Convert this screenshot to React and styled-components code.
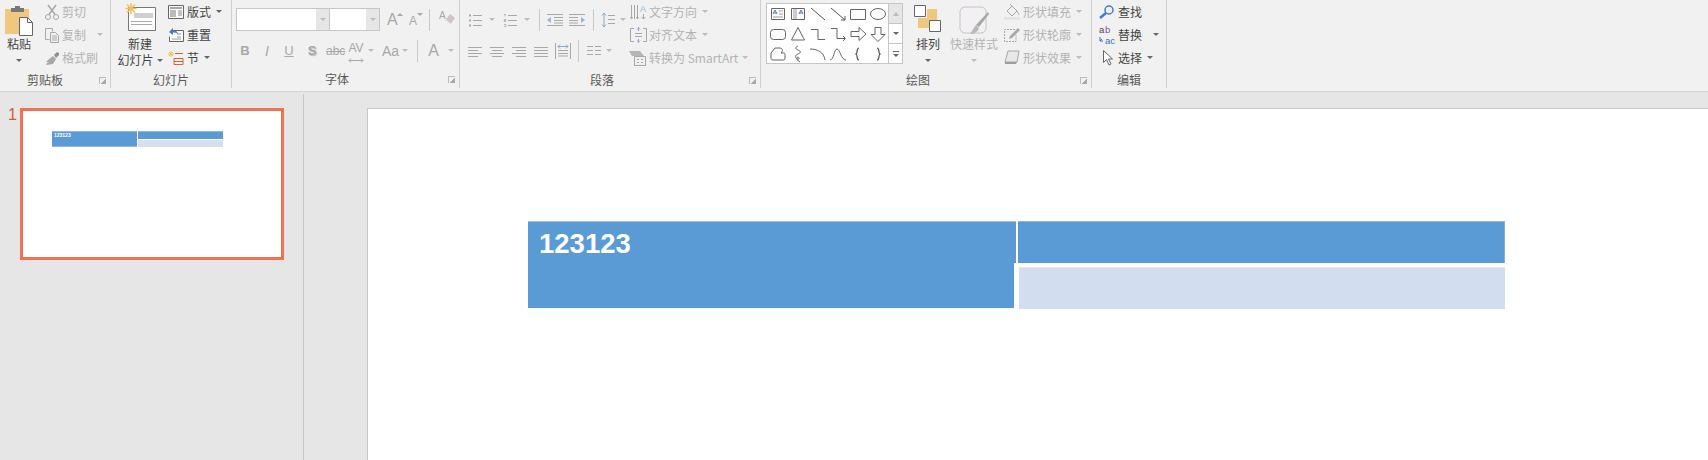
import React from 'react';
import styled, {createGlobalStyle} from 'styled-components';

const active = '#444';
const muted = '#b3b3b3';
const iconGray = '#a8a8a8';
const lineGray = '#c6c6c6';

const GlobalStyle = createGlobalStyle`
  html, body {
    margin: 0;
    height: 460px;
    overflow: hidden;
    background: #e6e6e6;
  }
  body {
    font-family: "Noto Sans CJK SC", "Liberation Sans", sans-serif;
    font-size: 12px;
  }
  svg {
    display: block;
    flex: none;
  }
`

const Page = styled.div`
  display: flex;
  flex-direction: column;
  width: 1708px;
  height: 460px;
  overflow: hidden;
`

const Ribbon = styled.div`
  display: flex;
  flex: none;
  height: 91px;
  background: #f1f1f1;
  border-bottom: 1px solid #d4d4d4;
`

const Group = styled.div`
  display: flex;
  flex-direction: column;
  flex: none;
  box-sizing: border-box;
  width: ${({$w}) => $w}px;
  height: 88px;
  border-right: 1px solid #d0d0d0;
`

const GroupBody = styled.div`
  display: flex;
  height: 71px;
  padding-left: ${({$pad}) => $pad || 0}px;
`

const GroupFooter = styled.div`
  display: flex;
  align-items: center;
  height: 17px;
  padding: 0 4px 0 ${({$labelX}) => $labelX}px;
  color: #5a5a5a;
  line-height: 17px;
`

const Launcher = styled.span`
  width: 6px;
  height: 6px;
  margin-left: auto;
  margin-top: 2px;
  border-left: 1px solid #bbb;
  border-top: 1px solid #bbb;
  background: linear-gradient(135deg, transparent 55%, #aaa 55%);
`

const LargeButton = styled.div`
  display: flex;
  flex-direction: column;
  align-items: center;
  flex: none;
  width: ${({$w}) => $w}px;
  margin-left: ${({$ml}) => $ml || 0}px;
  color: ${({$off}) => ($off ? muted : active)};
  line-height: 16px;
`

const LargeIcon = styled.div`
  display: flex;
  justify-content: center;
  height: ${({$top}) => 36 - $top}px;
  padding-top: ${({$top}) => $top}px;
`

const LargeText = styled.div`
  display: flex;
  align-items: center;
  justify-content: center;
  gap: 3px;
  height: 16px;
  white-space: nowrap;
`

const SmallStack = styled.div`
  display: flex;
  flex-direction: column;
  flex: none;
  margin-left: ${({$ml}) => $ml || 0}px;
`

const SmallRow = styled.div`
  display: flex;
  align-items: center;
  gap: ${({$gap}) => $gap || 2}px;
  height: 23px;
  color: ${({$off}) => ($off ? muted : active)};
  white-space: nowrap;
`

const IconSlot = styled.span`
  display: flex;
  justify-content: center;
  width: 16px;
`

const Caret = styled.span`
  flex: none;
  width: 0;
  height: 0;
  margin-left: ${({$ml}) => $ml || 0}px;
  border-left: 3px solid transparent;
  border-right: 3px solid transparent;
  border-top: 3px solid ${({$off}) => ($off ? '#bcbcbc' : '#666')};
`

const ToolColumn = styled.div`
  display: flex;
  flex-direction: column;
  flex: none;
  width: ${({$w}) => $w}px;
  padding-top: 8px;
`

const ToolRow = styled.div`
  display: flex;
  align-items: center;
  height: 23px;
  margin-bottom: 8px;
`

const Gap = styled.span`
  flex: none;
  width: ${({$w}) => $w}px;
`

const ToolSep = styled.span`
  flex: none;
  width: 1px;
  height: 22px;
  background: #c9c9c9;
`

const Glyph = styled.span`
  display: block;
  flex: none;
  width: ${({$w}) => $w}px;
  margin-top: ${({$mt}) => $mt || 0}px;
  color: ${iconGray};
  font-family: "Liberation Sans", sans-serif;
  font-size: ${({$size}) => $size || 13}px;
  font-weight: ${({$bold}) => ($bold ? 700 : 400)};
  font-style: ${({$italic}) => ($italic ? 'italic' : 'normal')};
  text-align: center;
  text-decoration: ${({$deco}) => $deco || 'none'};
  text-shadow: ${({$shadow}) => ($shadow ? '1px 1px 1px #bbb' : 'none')};
  line-height: 20px;
`

const GrowTool = styled.span`
  display: flex;
  flex: none;
  align-items: flex-start;
  width: 14px;
  height: 20px;
`

const GrowMark = styled.span`
  flex: none;
  width: 0;
  height: 0;
  margin-top: 3px;
  border-left: 3px solid transparent;
  border-right: 3px solid transparent;
  border-bottom: ${({$down}) => ($down ? 'none' : `3px solid ${iconGray}`)};
  border-top: ${({$down}) => ($down ? `3px solid ${iconGray}` : 'none')};
`

const EraserTool = styled.span`
  display: flex;
  flex: none;
  align-items: flex-end;
  width: 15px;
`

const FontBox = styled.div`
  display: flex;
  flex: none;
  box-sizing: border-box;
  width: 144px;
  height: 23px;
  border: 1px solid ${lineGray};
  background: #e6e6e6;
`

const FontField = styled.span`
  display: block;
  width: ${({$w}) => $w}px;
  background: #fff;
`

const FontDrop = styled.span`
  display: flex;
  align-items: center;
  justify-content: center;
  width: 13px;
  border-right: ${({$sep}) => ($sep ? '1px solid #c6c6c6' : 'none')};
`

const Gallery = styled.div`
  display: flex;
  flex: none;
  box-sizing: border-box;
  width: 137px;
  height: 61px;
  margin: 3px 0 0 5px;
  border: 1px solid ${lineGray};
  background: #fff;
`

const ShapeGrid = styled.div`
  display: grid;
  grid-template-columns: repeat(6, 20px);
  grid-auto-rows: 20px;
  box-sizing: border-box;
  width: 121px;
  padding-left: 1px;
  align-items: center;
  justify-items: center;
`

const ScrollColumn = styled.div`
  display: flex;
  flex-direction: column;
  flex: 1;
  border-left: 1px solid ${lineGray};
`

const ScrollButton = styled.div`
  display: flex;
  flex-direction: column;
  align-items: center;
  justify-content: center;
  gap: 2px;
  flex: 1;
  background: ${({$dim}) => ($dim ? '#e6e6e6' : '#fff')};
  border-top: ${({$first}) => ($first ? 'none' : '1px solid #c6c6c6')};
`

const ScrollBar = styled.span`
  width: 6px;
  height: 1px;
  background: #666;
`

const UpCaret = styled.span`
  width: 0;
  height: 0;
  border-left: 3px solid transparent;
  border-right: 3px solid transparent;
  border-bottom: 4px solid #bdbdbd;
`

const Workspace = styled.div`
  display: flex;
  flex: 1;
  min-height: 0;
`

const SlidePanel = styled.div`
  flex: none;
  display: flex;
  align-items: flex-start;
  box-sizing: border-box;
  width: 304px;
  margin-top: 2px;
  padding: 14px 0 0 8px;
  border-right: 1px solid ${lineGray};
`

const SlideNumber = styled.span`
  width: 12px;
  margin-top: -1px;
  color: #d9573a;
  font-family: "Liberation Sans", sans-serif;
  font-size: 16px;
  line-height: 16px;
`

const Thumbnail = styled.div`
  box-sizing: border-box;
  width: 264px;
  height: 152px;
  padding: 20px 0 0 29px;
  border: 3px solid #f27352;
  background: #fff;
`

const Editor = styled.div`
  flex: 1;
  padding: 16px 0 0 63px;
`

const Slide = styled.div`
  box-sizing: border-box;
  height: 400px;
  padding: 112px 0 0 160px;
  border-left: 1px solid ${lineGray};
  border-top: 1px solid ${lineGray};
  background: #fff;
`

const TableRoot = styled.div`
  display: flex;
  width: ${({$w}) => $w}px;
`

const SpanCell = styled.div`
  flex: none;
  box-sizing: border-box;
  width: 488px;
  height: 87px;
  padding-left: 11px;
  border-top: 1px solid #9dc3e8;
  background:
    linear-gradient(#5b9bd5 41px, transparent 41px),
    linear-gradient(to right, #5b9bd5 486px, transparent 486px);
  color: #fff;
  font-family: "Liberation Sans", sans-serif;
  font-size: 27.500px;
  font-weight: 700;
  line-height: 44px;
`

const RightColumn = styled.div`
  display: flex;
  flex-direction: column;
  flex: 1;
  margin-left: 2px;
`

const HeadCell = styled.div`
  box-sizing: border-box;
  height: 42px;
  border-top: 1px solid #8db8e2;
  border-right: 1px solid #7fb0df;
  background: #5b9bd5;
`

const BodyCell = styled.div`
  box-sizing: border-box;
  height: 42px;
  margin: 4px 0 0 1px;
  border-top: 1px solid #e4ebf6;
  background: #d2deef;
`

const MiniTable = styled.div`
  display: flex;
  width: 171px;
  height: 16px;
`

const MiniSpan = styled.div`
  flex: none;
  box-sizing: border-box;
  width: 85px;
  height: 16px;
  padding-left: 2px;
  border-top: 1px solid #8db8e2;
  border-bottom: 1px solid #8db8e2;
  background: #5b9bd5;
  color: #fff;
  font-family: "Liberation Sans", sans-serif;
  font-size: 5px;
  font-weight: 700;
  line-height: 7px;
`

const MiniRight = styled.div`
  display: flex;
  flex-direction: column;
  flex: 1;
  margin-left: 1px;
`

const MiniHead = styled.div`
  height: 8px;
  background: #5b9bd5;
  border-top: 1px solid #8db8e2;
  box-sizing: border-box;
`

const MiniBody = styled.div`
  height: 7px;
  margin-top: 1px;
  background: #d5dff0;
`

const Ico = ({w = 16, h = 16, stroke = iconGray, fill = 'none', sw = 1, children}) => (
  <svg width={w} height={h} viewBox={`0 0 ${w} ${h}`} fill={fill} stroke={stroke} strokeWidth={sw}>
    {children}
  </svg>
)

const PasteIcon = () => (
  <Ico w={30} h={31} stroke="none">
    <path d="M1 4h24v25H1z" fill="#f0c77f"/>
    <path d="M7 3h4V1h5v2h4v4H7z" fill="#777"/>
    <path d="M15.500 12.500h8l5 5v13h-13z" fill="#fff" stroke="#666"/>
    <path d="M23.500 12.500v5h5" fill="none" stroke="#666"/>
  </Ico>
)

const CutIcon = () => (
  <Ico>
    <circle cx="4" cy="13" r="2.500"/>
    <circle cx="12" cy="13" r="2.500"/>
    <path d="M5 10.500L12 1M11 10.500L4 1" strokeWidth="1.500"/>
  </Ico>
)

const CopyIcon = () => (
  <Ico>
    <path d="M1.500 1.500h7v3M1.500 1.500v11h4"/>
    <path d="M6.500 5.500h5l3 3v7h-8zM8 9h5M8 11h5M8 13h5" fill="#f1f1f1"/>
  </Ico>
)

const BrushIcon = () => (
  <Ico stroke="none" fill={iconGray}>
    <path d="M9 6l3 3-3 5-7 1 1-2 2-1-3 0 2-2z"/>
    <path d="M10 5l3-3 2 1 0 2-3 3z" fill="#8f8f8f"/>
  </Ico>
)

const NewSlideIcon = () => (
  <Ico w={31} h={28} stroke="none">
    <path d="M3.500 4.500h27v23h-27z" fill="#fff" stroke="#777"/>
    <path d="M9 10h19v5H9z" fill="#cfcfcf"/>
    <path d="M6 18.500h21M6 21.500h21" stroke="#a8a8a8"/>
    <path d="M6 0v11M0.500 5.500h11M2 1.500l8 8M10 1.500l-8 8" stroke="#f0c060" strokeWidth="1.500"/>
  </Ico>
)

const LayoutIcon = () => (
  <Ico stroke="#666">
    <path d="M.500 1.500h15v13H.500z" fill="#fff"/>
    <path d="M2 4h12" stroke="#888" strokeWidth="1.500"/>
    <path d="M2 6h6v7H2z" fill="#bbb" stroke="none"/>
    <path d="M10 7h4M10 9h4M10 11h4" stroke="#888"/>
  </Ico>
)

const ResetIcon = () => (
  <Ico stroke="#666">
    <path d="M3.500 3.500h12v11h-14v-5" fill="#fff"/>
    <path d="M9 7h4M9 10h4M4 12h9" stroke="#999"/>
    <path d="M1 5l4-4v2.500c3 0 5 1.500 5 4-1-1.500-2.500-2-5-2V8z" fill="#3f7fc4" stroke="none"/>
  </Ico>
)

const SectionIcon = () => (
  <Ico>
    <path d="M0 4h6M3 1v6M1 2l4 4M5 2L1 6" stroke="#f0c060"/>
    <path d="M7 3.500h8M6 8.500h9M6 8.500v6h9v-6M6 11.500h9" stroke="#d2633c"/>
  </Ico>
)

const EraserIcon = () => (
  <Ico w={10} h={13} stroke="none">
    <path d="M5 1l5 4-5 7-5-4z" fill="#cdc3c8"/>
    <path d="M1 7l5 4-1 1-5-4z" fill="#f6f6f6"/>
  </Ico>
)

const SpacingIcon = () => (
  <Ico w={16} h={5}>
    <path d="M1 2.500h14M1 2.500l2-2M1 2.500l2 2M15 2.500l-2-2M15 2.500l-2 2"/>
  </Ico>
)

const ListIcon = ({numbered}) => (
  <Ico w={14} h={14}>
    <path d="M5 2.500h9M5 7.500h9M5 12.500h9"/>
    {numbered
      ? <path d="M1 1.500h2M2 1.500v2M1 6.500h2v1H1v1h2M1 11.500h2v2H1" strokeWidth=".700"/>
      : <path d="M1 1.500h2v2H1zM1 6.500h2v2H1zM1 11.500h2v2H1z" fill={iconGray} stroke="none"/>}
  </Ico>
)

const IndentIcon = ({flip}) => (
  <Ico w={16} h={12}>
    <g transform={flip ? 'translate(16 0) scale(-1 1)' : undefined}>
      <path d="M0 .500h16M7 3.500h9M7 6.500h9M0 11.500h16M7 9h9"/>
      <path d="M0 6l4-3v6z" fill="#9ab6d4" stroke="none"/>
    </g>
  </Ico>
)

const LineSpacingIcon = () => (
  <Ico w={14} h={16}>
    <path d="M3 1v14M1 3.500L3 1l2 2.500M1 12.500L3 15l2-2.500" stroke="#8da9c6"/>
    <path d="M7 3.500h7M7 7.500h7M7 11.500h7"/>
  </Ico>
)

const AlignIcon = ({mode}) => {
  const short = {left: 'M0 5.500h10M0 11.500h10', center: 'M2 5.500h10M2 11.500h10', right: 'M4 5.500h10M4 11.500h10', full: 'M0 5.500h14M0 11.500h14'}[mode];
  return (
    <Ico w={14} h={12}>
      <path d="M0 2.500h14M0 8.500h14"/>
      <path d={short}/>
    </Ico>
  );
}

const DistributeIcon = () => (
  <Ico w={16} h={16}>
    <path d="M.500 0v16M15.500 0v16M3 7.500h10M3 10.500h10M3 13h10"/>
    <path d="M3 3.500h10M3 3.500l2-2M3 3.500l2 2M13 3.500l-2-2M13 3.500l-2 2" stroke="#8da9c6"/>
  </Ico>
)

const ColumnsIcon = () => (
  <Ico w={14} h={10}>
    <path d="M0 .500h6M8 .500h6M0 4.500h6M8 4.500h6M0 8.500h6M8 8.500h6"/>
  </Ico>
)

const TextDirIcon = () => (
  <Ico w={17} h={16}>
    <path d="M1.500 1v14M4.500 1v14M7.500 1v14M1.500 15l-1-2M1.500 15l1-2M7.500 15l-1-2M7.500 15l1-2"/>
    <text x="10" y="8" fill="#9ab6d4" stroke="none" fontFamily="Liberation Sans" fontSize="9">A</text>
    <path d="M13.500 10v5M11.500 13l2 2 2-2"/>
  </Ico>
)

const AlignTextIcon = () => (
  <Ico w={17} h={16}>
    <path d="M4 1.500H.500v13H4M13 1.500h3.500v13H13"/>
    <path d="M5 6.500h7M5 9.500h7" />
    <path d="M8.500 0v4M7 2.500L8.500 1 10 2.500M8.500 16v-4M7 13.500L8.500 15l1.500-1.500" stroke="#8da9c6"/>
  </Ico>
)

const SmartArtIcon = () => (
  <Ico w={18} h={16} stroke="none">
    <path d="M0 1h11l4 5H3z" fill="#b5b5b5"/>
    <path d="M5.500 6.500h11v9h-11z" fill="#f1f1f1" stroke={iconGray}/>
    <path d="M8 9.500h2M12 9.500h2M8 12.500h2M12 12.500h2" stroke={iconGray}/>
  </Ico>
)

const shapes = [
  <><path d="M2.500 3.500h13v11h-13z" stroke="#666"/><path d="M4 9l2-4 2 4M4.500 8h3" stroke="#3f7fc4"/><path d="M10 6h4M10 9h4M4 12h10" stroke="#999"/></>,
  <><path d="M2.500 3.500h13v11h-13z" stroke="#666"/><path d="M5 4v10M7 4v10" stroke="#999"/><path d="M10 9l2-4 2 4M10.500 8h3" stroke="#3f7fc4"/></>,
  <path d="M2 3l14 12" stroke="#555"/>,
  <path d="M2 3l14 12M16 11v4h-4" stroke="#555"/>,
  <path d="M1.500 4.500h15v10h-15z" stroke="#666"/>,
  <ellipse cx="9" cy="9" rx="7.500" ry="5.500" stroke="#666"/>,
  <rect x="1.500" y="4.500" width="15" height="10" rx="3" stroke="#666"/>,
  <path d="M9 2.500l6.500 12.500h-13z" stroke="#666"/>,
  <path d="M2 4.500h7v10h7" stroke="#666"/>,
  <path d="M2 3.500h6v10h8M14 11l2.500 2.500L14 16" stroke="#666"/>,
  <path d="M2 6.500h8V2.500l7 6.500-7 6.500v-4H2z" stroke="#666"/>,
  <path d="M6 2.500h6v7h4l-7 7-7-7h4z" stroke="#666"/>,
  <path d="M2 8l4-5h5c2 0 3 2 2 4l-1 1h3c1 0 1 1 1 2v3c0 2-1 2-2 2H4c-2 0-2-1-2-2z" stroke="#666"/>,
  <path d="M9 1C6 2 6 4 9 5c3 1 3 3 0 4-3 1-3 4-1 5s3-1 1-2c-2 0-1 4 2 5" stroke="#666"/>,
  <path d="M1 4c7 0 14 3 15 11" stroke="#666"/>,
  <path d="M1 15c4 0 4-11 7-11s4 11 9 11" stroke="#666"/>,
  <path d="M10 3c-3 0-1 5-3 6 2 1 0 6 3 6" stroke="#555" strokeWidth="1.200"/>,
  <path d="M8 3c3 0 1 5 3 6-2 1 0 6-3 6" stroke="#555" strokeWidth="1.200"/>,
]

const ArrangeIcon = () => (
  <Ico w={28} h={28} stroke="none">
    <path d="M13 4h10v11H13zM4 13h11v10H4z" fill="#f0c77f"/>
    <path d="M.500.500h11v11H.500z" fill="#fff" stroke="#666"/>
    <path d="M15.500 15.500h11v11h-11z" fill="#fff" stroke="#666"/>
  </Ico>
)

const QuickStyleIcon = () => (
  <Ico w={30} h={30} stroke="none">
    <rect x="1" y="1" width="26" height="26" rx="5" fill="#f3f0f3" stroke="#c4c4c4"/>
    <path d="M29 6l1 2-10 13-3-2z" fill={iconGray}/>
    <path d="M17 19l3 3c-1 4-5 6-9 6 2-2 3-6 6-9z" fill="#b9b9b9"/>
  </Ico>
)

const FillIcon = () => (
  <Ico>
    <path d="M3 7l5-5 5 5-5 5z" fill="#f1f1f1"/>
    <path d="M8 2L6 0M13 7c1 2 2 3 2 4" stroke="#b5a5ad"/>
    <path d="M0 14.500h16" stroke="#e2e2e2" strokeWidth="2.500"/>
  </Ico>
)

const OutlineIcon = () => (
  <Ico>
    <path d="M11 2.500H.500v12H12V8" strokeDasharray="2 1"/>
    <path d="M14 1l2 2-8 8-3 1 1-3z" fill={iconGray} stroke="none"/>
  </Ico>
)

const EffectIcon = () => (
  <Ico h={15} stroke="none">
    <path d="M4 1h11l-2 11H1z" fill="#e8e8e8" stroke={iconGray}/>
    <path d="M1 12h12l-1 2H1z" fill="#9d9d9d"/>
  </Ico>
)

const FindIcon = () => (
  <Ico stroke="#3f7fc4" sw={1.500}>
    <circle cx="10" cy="6" r="4"/>
    <path d="M7 9l-6 5" strokeWidth="2.500"/>
  </Ico>
)

const ReplaceIcon = () => (
  <Ico h={22} stroke="none">
    <text x="0" y="9" fill="#444" fontFamily="Liberation Sans" fontSize="9.500">a</text>
    <text x="6" y="9" fill="#7b4fa3" fontFamily="Liberation Sans" fontSize="9.500">b</text>
    <text x="6" y="19.700" fill="#2f78c0" fontFamily="Liberation Sans" fontSize="9.500">ac</text>
    <path d="M1 13v4h3M1 17l2-2" stroke="#2f78c0" fill="none"/>
  </Ico>
)

const SelectIcon = () => (
  <Ico h={18} stroke="#666">
    <path d="M4.500 1.500v12l3-3 2.500 5.500 2-1-2.500-5h4z" fill="#fff"/>
  </Ico>
)

const App = () => (
  <Page>
    <GlobalStyle/>
    <Ribbon>
      <Group $w={111}>
        <GroupBody>
          <LargeButton $w={38}>
            <LargeIcon $top={5}><PasteIcon/></LargeIcon>
            <LargeText>粘贴</LargeText>
            <LargeText><Caret/></LargeText>
          </LargeButton>
          <SmallStack $ml={6}>
            <SmallRow $off><IconSlot><CutIcon/></IconSlot>剪切</SmallRow>
            <SmallRow $off><IconSlot><CopyIcon/></IconSlot>复制<Caret $off $ml={9}/></SmallRow>
            <SmallRow $off><IconSlot><BrushIcon/></IconSlot>格式刷</SmallRow>
          </SmallStack>
        </GroupBody>
        <GroupFooter $labelX={27}>剪贴板<Launcher/></GroupFooter>
      </Group>

      <Group $w={121}>
        <GroupBody $pad={4}>
          <LargeButton $w={50}>
            <LargeIcon $top={3}><NewSlideIcon/></LargeIcon>
            <LargeText>新建</LargeText>
            <LargeText>幻灯片<Caret/></LargeText>
          </LargeButton>
          <SmallStack $ml={3}>
            <SmallRow $gap={3}><IconSlot><LayoutIcon/></IconSlot>版式<Caret $ml={2}/></SmallRow>
            <SmallRow $gap={3}><IconSlot><ResetIcon/></IconSlot>重置</SmallRow>
            <SmallRow $gap={3}><IconSlot><SectionIcon/></IconSlot>节<Caret $ml={2}/></SmallRow>
          </SmallStack>
        </GroupBody>
        <GroupFooter $labelX={42}>幻灯片</GroupFooter>
      </Group>

      <Group $w={228}>
        <ToolColumn $w={227}>
          <ToolRow>
            <Gap $w={4}/>
            <FontBox>
              <FontField $w={79}/>
              <FontDrop $sep><Caret $off/></FontDrop>
              <FontField $w={36}/>
              <FontDrop><Caret $off/></FontDrop>
            </FontBox>
            <Gap $w={7}/>
            <GrowTool>
              <Glyph $w={10} $size={16}>A</Glyph>
              <GrowMark/>
            </GrowTool>
            <Gap $w={8}/>
            <GrowTool>
              <Glyph $w={8} $size={12} $mt={1}>A</Glyph>
              <GrowMark $down/>
            </GrowTool>
            <Gap $w={6}/>
            <ToolSep/>
            <Gap $w={9}/>
            <EraserTool>
              <Glyph $w={6} $size={10} $mt={-8}>A</Glyph>
              <EraserIcon/>
            </EraserTool>
          </ToolRow>
          <ToolRow>
            <Gap $w={7}/>
            <Glyph $w={12} $bold>B</Glyph>
            <Gap $w={10}/>
            <Glyph $w={12} $italic $size={14}>I</Glyph>
            <Gap $w={10}/>
            <Glyph $w={12} $deco="underline">U</Glyph>
            <Gap $w={10}/>
            <Glyph $w={14} $bold $shadow>S</Glyph>
            <Gap $w={7}/>
            <Glyph $w={18} $deco="line-through" $size={12}>abc</Glyph>
            <Gap $w={4}/>
            <Glyph $w={16} $size={12}>AV<SpacingIcon/></Glyph>
            <Gap $w={4}/>
            <Caret $off/>
            <Gap $w={8}/>
            <Glyph $w={16} $size={14}>Aa</Glyph>
            <Gap $w={4}/>
            <Caret $off/>
            <Gap $w={9}/>
            <ToolSep/>
            <Gap $w={10}/>
            <Glyph $w={11} $size={16}>A</Glyph>
            <Gap $w={9}/>
            <Caret $off/>
          </ToolRow>
        </ToolColumn>
        <GroupFooter $labelX={93}>字体<Launcher/></GroupFooter>
      </Group>

      <Group $w={301}>
        <GroupBody>
          <ToolColumn $w={170}>
            <ToolRow>
              <Gap $w={8}/>
              <ListIcon/>
              <Gap $w={7}/>
              <Caret $off/>
              <Gap $w={8}/>
              <ListIcon numbered/>
              <Gap $w={7}/>
              <Caret $off/>
              <Gap $w={9}/>
              <ToolSep/>
              <Gap $w={7}/>
              <IndentIcon/>
              <Gap $w={6}/>
              <IndentIcon flip/>
              <Gap $w={8}/>
              <ToolSep/>
              <Gap $w={7}/>
              <LineSpacingIcon/>
              <Gap $w={5}/>
              <Caret $off/>
            </ToolRow>
            <ToolRow>
              <Gap $w={8}/>
              <AlignIcon mode="left"/>
              <Gap $w={8}/>
              <AlignIcon mode="center"/>
              <Gap $w={8}/>
              <AlignIcon mode="right"/>
              <Gap $w={8}/>
              <AlignIcon mode="full"/>
              <Gap $w={7}/>
              <DistributeIcon/>
              <Gap $w={7}/>
              <ToolSep/>
              <Gap $w={8}/>
              <ColumnsIcon/>
              <Gap $w={5}/>
              <Caret $off/>
            </ToolRow>
          </ToolColumn>
          <SmallStack>
            <SmallRow $off $gap={3}><IconSlot><TextDirIcon/></IconSlot>文字方向<Caret $off $ml={2}/></SmallRow>
            <SmallRow $off $gap={3}><IconSlot><AlignTextIcon/></IconSlot>对齐文本<Caret $off $ml={2}/></SmallRow>
            <SmallRow $off $gap={3}><IconSlot><SmartArtIcon/></IconSlot>转换为 SmartArt<Caret $off $ml={1}/></SmallRow>
          </SmallStack>
        </GroupBody>
        <GroupFooter $labelX={130}>段落<Launcher/></GroupFooter>
      </Group>

      <Group $w={331}>
        <GroupBody>
          <Gallery>
            <ShapeGrid>
              {shapes.map((shape, index) => (
                <Ico key={index} w={18} h={18} stroke="#666">{shape}</Ico>
              ))}
            </ShapeGrid>
            <ScrollColumn>
              <ScrollButton $first $dim><UpCaret/></ScrollButton>
              <ScrollButton><Caret/></ScrollButton>
              <ScrollButton><ScrollBar/><Caret/></ScrollButton>
            </ScrollColumn>
          </Gallery>
          <LargeButton $w={40} $ml={5}>
            <LargeIcon $top={5}><ArrangeIcon/></LargeIcon>
            <LargeText>排列</LargeText>
            <LargeText><Caret/></LargeText>
          </LargeButton>
          <LargeButton $w={52} $off>
            <LargeIcon $top={6}><QuickStyleIcon/></LargeIcon>
            <LargeText>快速样式</LargeText>
            <LargeText><Caret $off/></LargeText>
          </LargeButton>
          <SmallStack $ml={4}>
            <SmallRow $off $gap={3}><IconSlot><FillIcon/></IconSlot>形状填充<Caret $off $ml={2}/></SmallRow>
            <SmallRow $off $gap={3}><IconSlot><OutlineIcon/></IconSlot>形状轮廓<Caret $off $ml={2}/></SmallRow>
            <SmallRow $off $gap={3}><IconSlot><EffectIcon/></IconSlot>形状效果<Caret $off $ml={2}/></SmallRow>
          </SmallStack>
        </GroupBody>
        <GroupFooter $labelX={145}>绘图<Launcher/></GroupFooter>
      </Group>

      <Group $w={75}>
        <GroupBody $pad={7}>
          <SmallStack>
            <SmallRow $gap={3}><IconSlot><FindIcon/></IconSlot>查找</SmallRow>
            <SmallRow $gap={3}><IconSlot><ReplaceIcon/></IconSlot>替换<Caret $ml={8}/></SmallRow>
            <SmallRow $gap={3}><IconSlot><SelectIcon/></IconSlot>选择<Caret $ml={2}/></SmallRow>
          </SmallStack>
        </GroupBody>
        <GroupFooter $labelX={25}>编辑</GroupFooter>
      </Group>
    </Ribbon>

    <Workspace>
      <SlidePanel>
        <SlideNumber>1</SlideNumber>
        <Thumbnail>
          <MiniTable>
            <MiniSpan>123123</MiniSpan>
            <MiniRight>
              <MiniHead/>
              <MiniBody/>
            </MiniRight>
          </MiniTable>
        </Thumbnail>
      </SlidePanel>
      <Editor>
        <Slide>
          <TableRoot $w={977}>
            <SpanCell>123123</SpanCell>
            <RightColumn>
              <HeadCell/>
              <BodyCell/>
            </RightColumn>
          </TableRoot>
        </Slide>
      </Editor>
    </Workspace>
  </Page>
);

export default App;
